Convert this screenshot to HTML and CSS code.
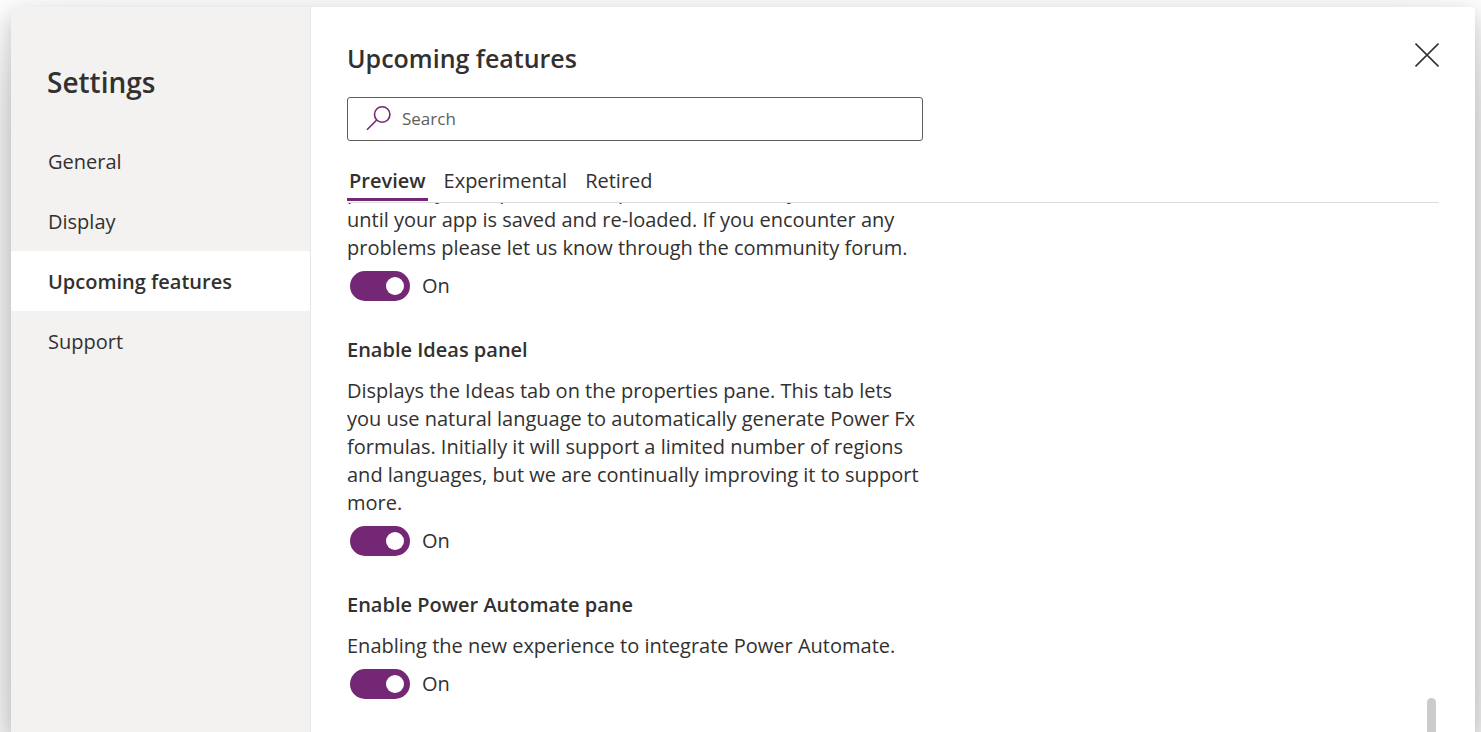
FILE: index.html
```
<!DOCTYPE html>
<html lang="en">
<head>
<meta charset="utf-8">
<meta name="viewport" content="width=device-width, initial-scale=1">
<title>Settings</title>
<link rel="stylesheet" href="styles.css">
</head>
<body>
<div class="dialog" role="dialog" aria-labelledby="dialog-title">
  <aside class="sidebar">
    <h1 class="sidebar-title" id="dialog-title">Settings</h1>
    <nav class="nav">
      <button class="nav-item" type="button">General</button>
      <button class="nav-item" type="button">Display</button>
      <button class="nav-item nav-item-active" type="button" aria-current="page">Upcoming features</button>
      <button class="nav-item" type="button">Support</button>
    </nav>
  </aside>
  <main class="content">
    <header class="content-header">
      <h2 class="content-title">Upcoming features</h2>
      <button class="close" type="button" aria-label="Close">
        <svg width="24" height="26" viewBox="0 0 24 26" fill="none" stroke="currentColor" stroke-width="1.6"><path d="M.5 1.500l23 23M23.500 1.500l-23 23"/></svg>
      </button>
    </header>
    <label class="search">
      <svg class="search-icon" width="26" height="26" viewBox="0 0 26 26" fill="none" stroke="currentColor" stroke-width="1.6"><circle cx="16.200" cy="8.500" r="7.700"/><path d="M10.700 14L1 23.700"/></svg>
      <input class="search-input" type="search" placeholder="Search" aria-label="Search">
    </label>
    <div class="tabs" role="tablist">
      <button class="tab tab-active" type="button" role="tab" aria-selected="true">Preview</button>
      <button class="tab" type="button" role="tab" aria-selected="false">Experimental</button>
      <button class="tab" type="button" role="tab" aria-selected="false">Retired</button>
    </div>
    <div class="scroll-area">
      <div class="features">
        <section class="feature">
          <p class="feature-text">potentially not open. These updates will not stay<br>until your app is saved and re-loaded. If you encounter any problems please let us know through the community forum.</p>
          <label class="toggle"><input class="switch" type="checkbox" role="switch" checked>On</label>
        </section>
        <section class="feature">
          <h3 class="feature-title">Enable Ideas panel</h3>
          <p class="feature-text">Displays the Ideas tab on the properties pane. This tab lets you use natural language to automatically generate Power Fx formulas. Initially it will support a limited number of regions and languages, but we are continually improving it to support more.</p>
          <label class="toggle"><input class="switch" type="checkbox" role="switch" checked>On</label>
        </section>
        <section class="feature">
          <h3 class="feature-title">Enable Power Automate pane</h3>
          <p class="feature-text">Enabling the new experience to integrate Power Automate.</p>
          <label class="toggle"><input class="switch" type="checkbox" role="switch" checked>On</label>
        </section>
      </div>
      <div class="scroll-thumb"></div>
    </div>
  </main>
</div>
</body>
</html>
```
FILE: styles.css
```
* {
  box-sizing: border-box;
}

body {
  margin: 0;
  height: 100vh;
  padding: 7px 6px 0 11px;
  overflow: hidden;
  background: #fff;
  color: #323130;
  font: 20px/28px "Open Sans", "Noto Sans", sans-serif;
}

h1, h2, h3, p {
  margin: 0;
}

button {
  padding: 0;
  border: 0;
  background: none;
  color: inherit;
  font: inherit;
  cursor: pointer;
}

.dialog {
  display: flex;
  height: 100%;
  border-radius: 3px 3px 0 0;
  background: #fff;
  box-shadow: 0 38px 86px rgba(0, 0, 0, 0.22), 0 8px 22px rgba(0, 0, 0, 0.18);
}

.sidebar {
  flex: 0 0 300px;
  border-right: 1px solid #e6e6e6;
  border-radius: 3px 0 0 0;
  background: #f3f2f1;
}

.sidebar-title {
  padding: 55px 36px 29px;
  font-size: 28px;
  font-weight: 600;
  line-height: 40px;
}

.nav {
  display: flex;
  flex-direction: column;
}

.nav-item {
  height: 60px;
  padding: 2px 37px 0;
  border-radius: 3px;
  text-align: left;
}

.nav-item-active {
  background: #fff;
  font-weight: 600;
}

.content {
  display: flex;
  flex: 1;
  flex-direction: column;
  min-width: 0;
  padding: 34px 36px 0;
}

.content-header {
  display: flex;
  align-items: flex-start;
  justify-content: space-between;
}

.content-title {
  font-size: 25px;
  font-weight: 600;
  line-height: 34px;
}

.close {
  display: flex;
  padding-top: 1px;
}

.search {
  display: flex;
  align-items: center;
  width: 100%;
  max-width: 576px;
  height: 44px;
  margin-top: 22px;
  padding: 0 18px;
  gap: 10px;
  border: 1px solid #605e5c;
  border-radius: 3px;
}

.search-icon {
  flex: none;
  color: #742774;
}

.search-input {
  flex: 1;
  min-width: 0;
  padding: 0;
  border: 0;
  outline: 0;
  background: none;
  color: inherit;
  font: inherit;
  font-size: 17px;
}

.search-input::placeholder {
  color: #605e5c;
}

.tabs {
  display: flex;
  flex: none;
  gap: 14px;
  margin-top: 20px;
  border-bottom: 1px solid #dcdcdc;
}

.tab {
  height: 40px;
  margin-bottom: 1px;
  padding: 2px 2px 0;
  border-bottom: 3px solid transparent;
}

.tab-active {
  border-color: #742774;
  font-weight: 600;
}

.scroll-area {
  position: relative;
  flex: 1;
  min-height: 0;
  overflow: hidden;
}

.features {
  display: flex;
  flex-direction: column;
  gap: 35px;
  max-width: 576px;
  margin-top: -25px;
}

.feature-title {
  margin-bottom: 13px;
  font-size: 20px;
  font-weight: 600;
}

.toggle {
  display: flex;
  align-items: center;
  gap: 12px;
  width: max-content;
  height: 30px;
  margin: 9px 3px 0;
}

.switch {
  display: flex;
  align-items: center;
  justify-content: flex-end;
  width: 60px;
  height: 30px;
  margin: 0;
  padding: 6px;
  appearance: none;
  border-radius: 15px;
  background: #742774;
  cursor: pointer;
}

.switch::before {
  width: 18px;
  height: 18px;
  border-radius: 50%;
  background: #fff;
  content: "";
}

.switch:not(:checked) {
  justify-content: flex-start;
  background: #605e5c;
}

.scroll-thumb {
  position: absolute;
  right: 3px;
  bottom: -40px;
  width: 9px;
  height: 74px;
  border-radius: 5px;
  background: #cbcbcb;
}
```
